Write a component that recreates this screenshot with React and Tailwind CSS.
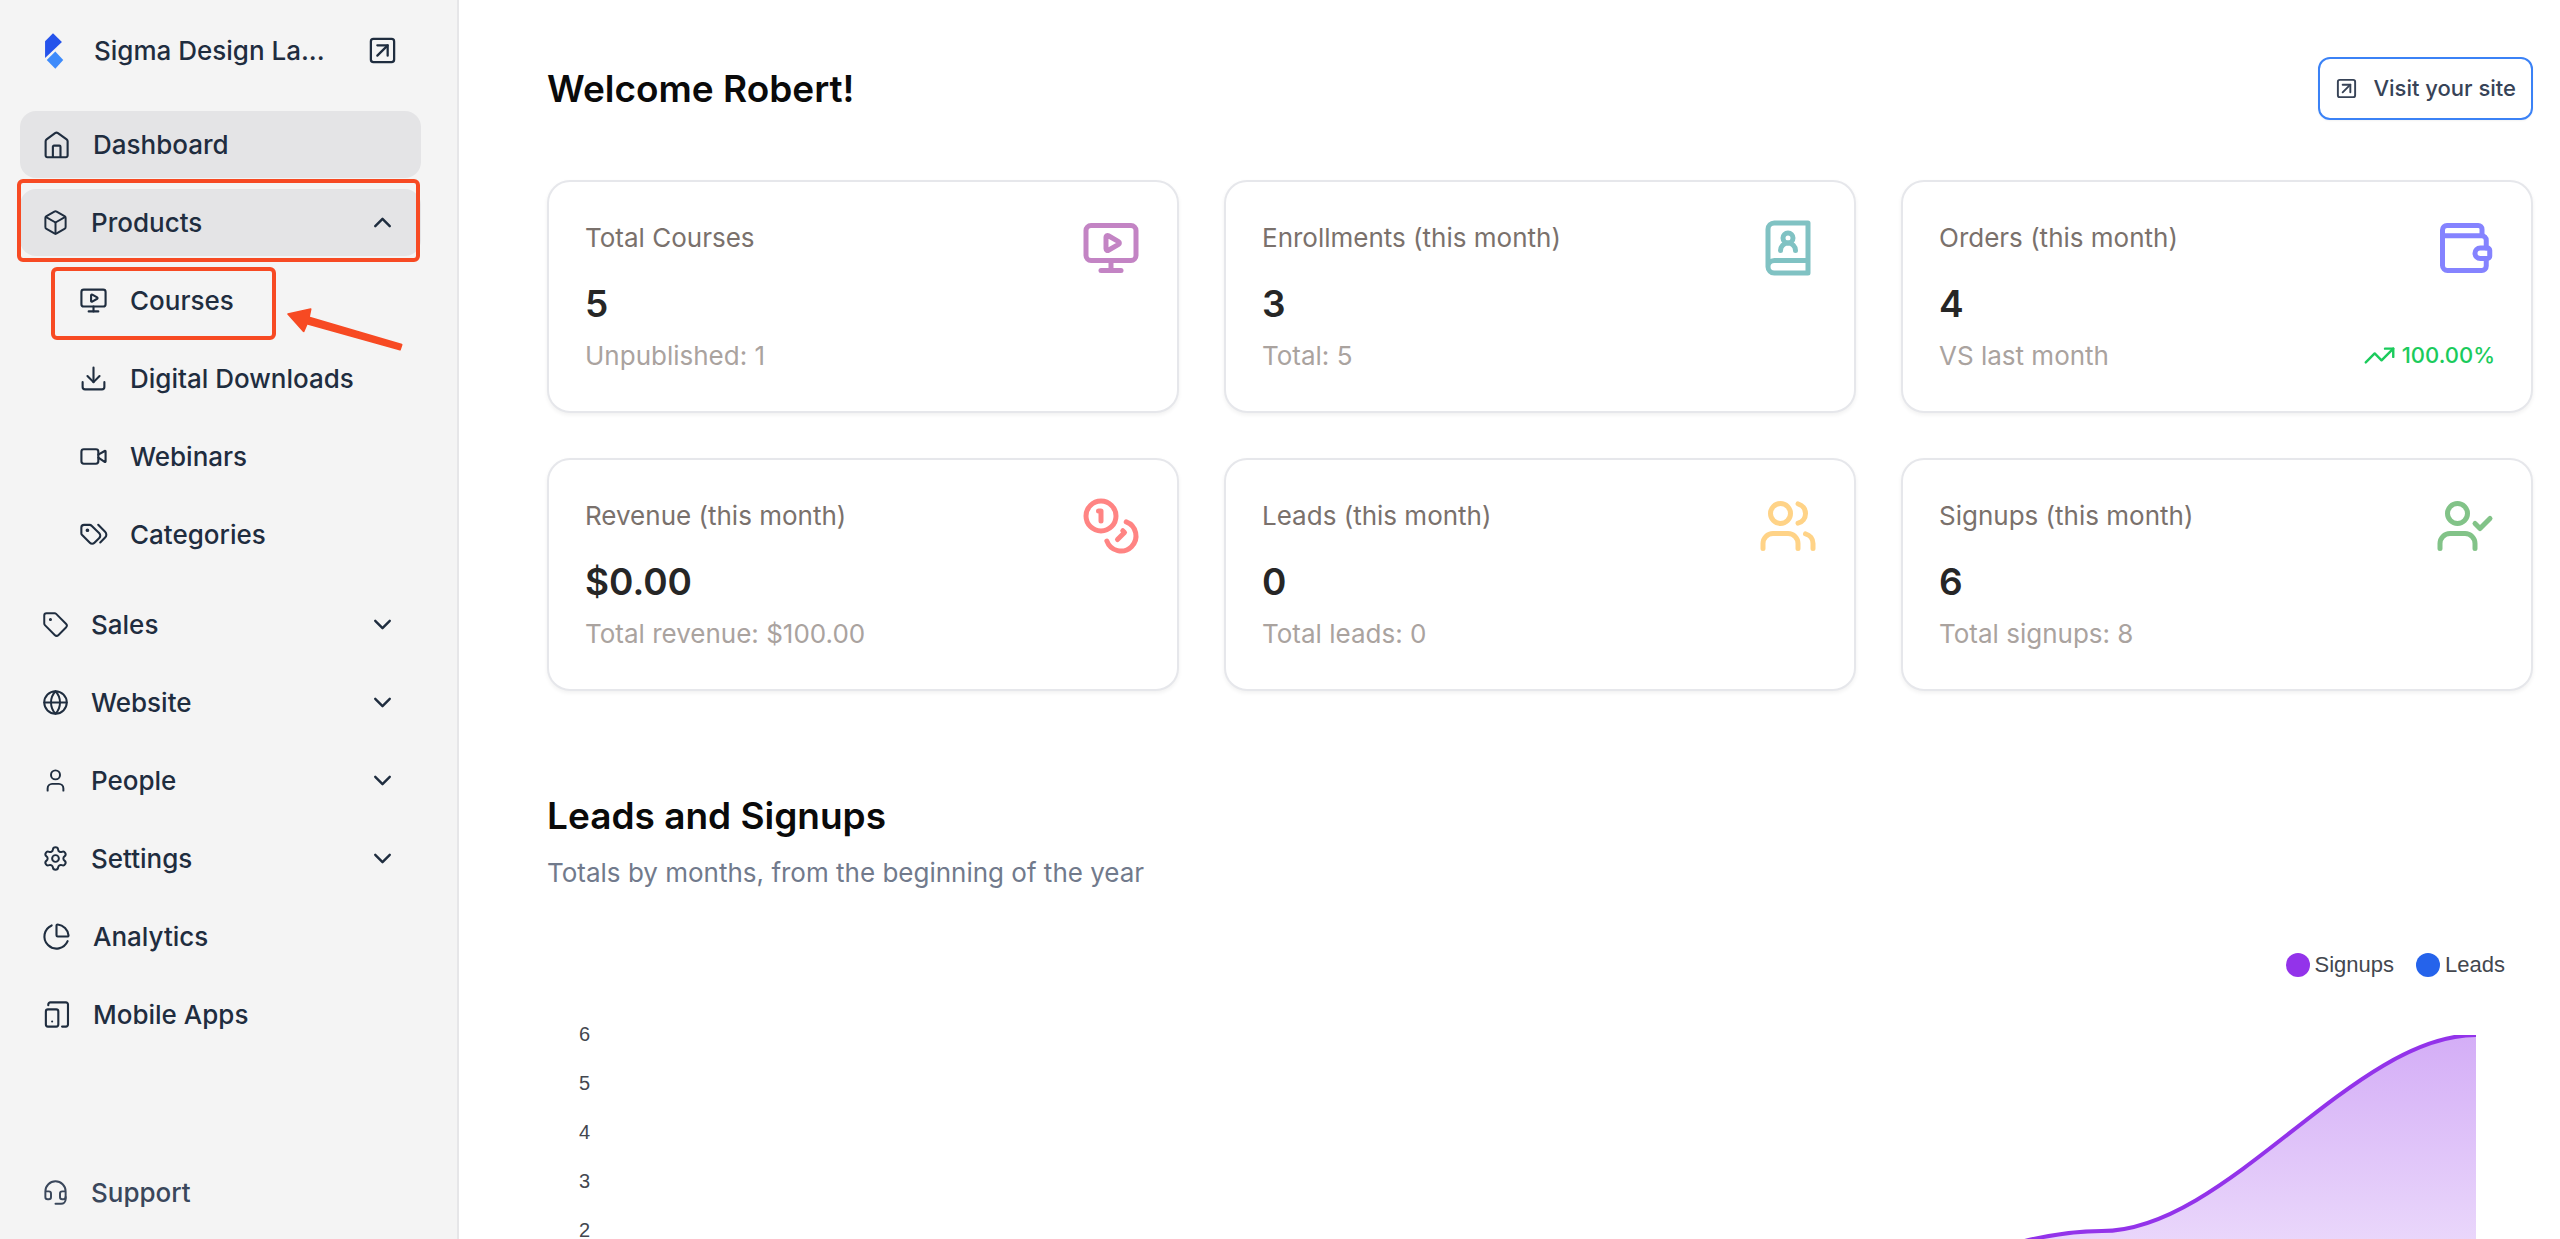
import React, { useState } from "react";
import {
  Box,
  ChartPie,
  ChevronDown,
  ChevronUp,
  Download,
  Globe,
  Headset,
  MonitorPlay,
  Settings,
  SquareArrowUpRight,
  Tag,
  TrendingUp,
  User,
  Video,
} from "lucide-react";

const Icon = ({ children, viewBox = "0 0 24 24", strokeWidth = 1.5, className }) => (
  <svg
    viewBox={viewBox}
    fill="none"
    stroke="currentColor"
    strokeWidth={strokeWidth}
    strokeLinecap="round"
    strokeLinejoin="round"
    className={className}
    aria-hidden="true"
  >
    {children}
  </svg>
);

const HomeIcon = (props) => (
  <Icon {...props}>
    <path d="M3 9.4a2 2 0 0 1 .8-1.6l7-5.2a2 2 0 0 1 2.4 0l7.2 5.2a2 2 0 0 1 .8 1.6v11.7a1.4 1.4 0 0 1-1.4 1.4H4.4A1.4 1.4 0 0 1 3 21.1z" />
    <path d="M9 22.3V13.8a.9.9 0 0 1 .9-.9h4.5a.9.9 0 0 1 .9.9v8.500" />
  </Icon>
);

const TagsIcon = (props) => (
  <Icon {...props} viewBox="1.250 2.400 21.500 21.500" strokeWidth={1.55}>
    <path d="M3 8v4.172a2 2 0 0 0 .586 1.414l5.71 5.71a2.41 2.41 0 0 0 3.408 0l3.592-3.592a2.41 2.41 0 0 0 0-3.408l-5.71-5.71A2 2 0 0 0 9.172 6H5a2 2 0 0 0-2 2" />
    <path d="m17 19 3.592-3.592a3 3 0 0 0 0-4.316L15.500 6" />
    <circle cx="7.500" cy="10" r=".6" fill="currentColor" />
  </Icon>
);

const DevicesIcon = (props) => (
  <Icon {...props}>
    <rect x="3.200" y="7.800" width="10.300" height="14.200" rx="1.700" />
    <path d="M5.2 4.3v-.6A1.7 1.7 0 0 1 6.9 2h12.9a1.7 1.7 0 0 1 1.7 1.7v16.6a1.7 1.7 0 0 1-1.7 1.7h-3.200" />
    <path d="M8.400 17.800v.01" />
  </Icon>
);

const BookUserIcon = (props) => (
  <Icon {...props}>
    <path d="M4 19.5v-15A2.5 2.5 0 0 1 6.5 2H20v20H6.5a2.5 2.5 0 0 1 0-5H20" />
    <circle cx="12" cy="8" r="2" />
    <path d="M15 13a3 3 0 1 0-6 0" />
  </Icon>
);

const WalletIcon = (props) => (
  <Icon {...props}>
    <path d="M18.8 7V4.5A1.5 1.5 0 0 0 17.3 3H4.8A1.8 1.8 0 0 0 3 4.8V19a2 2 0 0 0 2 2h13.7a1.8 1.8 0 0 0 1.8-1.8v-3" />
    <path d="M3 7.1h15.7a1.8 1.8 0 0 1 1.8 1.8V12" />
    <path d="M18.1 12H21a.9.9 0 0 1 .9.9v2.4a.9.9 0 0 1-.9.9h-2.9a2.1 2.1 0 0 1 0-4.200z" />
  </Icon>
);

const CoinsIcon = (props) => (
  <Icon {...props}>
    <circle cx="8" cy="8" r="6" />
    <path d="M18.09 10.37A6 6 0 1 1 10.34 18" />
    <path d="M7 6h1v4" />
    <path d="m16.71 13.88.7.71-2.82 2.82" />
  </Icon>
);

const UsersIcon = (props) => (
  <Icon {...props}>
    <path d="M16 21v-2a4 4 0 0 0-4-4H6a4 4 0 0 0-4 4v2" />
    <circle cx="9" cy="7" r="4" />
    <path d="M22 21v-2a4 4 0 0 0-3-3.87" />
    <path d="M16 3.13a4 4 0 0 1 0 7.75" />
  </Icon>
);

const UserCheckIcon = (props) => (
  <Icon {...props}>
    <path d="M16 21v-2a4 4 0 0 0-4-4H6a4 4 0 0 0-4 4v2" />
    <circle cx="9" cy="7" r="4" />
    <path d="m16 11 2 2 4-4" />
  </Icon>
);

const Logo = () => (
  <svg viewBox="134 99 58 109" className="w-5 h-9 shrink-0" aria-hidden="true">
    <path d="M160 100 187 126 136 175V124z" fill="#2553eb" />
    <path d="M167 155 191 181 167 207 141 181z" fill="#3e8bfb" />
  </svg>
);

const productLinks = [
  { name: "Courses", icon: MonitorPlay },
  { name: "Digital Downloads", icon: Download },
  { name: "Webinars", icon: Video },
  { name: "Categories", icon: TagsIcon },
];

const groups = [
  { name: "Sales", icon: Tag },
  { name: "Website", icon: Globe },
  { name: "People", icon: User },
  { name: "Settings", icon: Settings },
];

const cards = [
  { title: "Total Courses", value: "5", note: "Unpublished: 1", icon: MonitorPlay, color: "text-[#c384c4]" },
  { title: "Enrollments (this month)", value: "3", note: "Total: 5", icon: BookUserIcon, color: "text-[#80c2c3]" },
  { title: "Orders (this month)", value: "4", note: "VS last month", icon: WalletIcon, color: "text-[#8583ff]", trend: "100.00%" },
  { title: "Revenue (this month)", value: "$0.00", note: "Total revenue: $100.00", icon: CoinsIcon, color: "text-[#ff8483]" },
  { title: "Leads (this month)", value: "0", note: "Total leads: 0", icon: UsersIcon, color: "text-[#ffd387]" },
  { title: "Signups (this month)", value: "6", note: "Total signups: 8", icon: UserCheckIcon, color: "text-[#82c388]" },
];

const NavLink = ({ name, icon: NavIcon, active, nested }) => (
  <a
    href="#"
    className={`flex items-center gap-[22px] h-[67px] pr-[22px] rounded-2xl ${
      nested ? "pl-[59px]" : "pl-[22px]"
    } ${active ? "bg-[#e4e4e6]" : ""}`}
  >
    <NavIcon className="size-[29px] shrink-0" strokeWidth={1.75} />
    {name}
  </a>
);

const NavGroup = ({ name, icon: NavIcon, open, onClick }) => (
  <button
    type="button"
    onClick={onClick}
    aria-expanded={open}
    className={`flex items-center gap-[22px] w-full h-[67px] pl-[22px] pr-6 rounded-2xl ${
      open ? "bg-[#e4e4e6]" : ""
    }`}
  >
    <NavIcon className="size-[27px] shrink-0" strokeWidth={1.75} />
    <span className="flex-1 text-left">{name}</span>
    {open ? (
      <ChevronUp className="size-[29px]" strokeWidth={2} />
    ) : (
      <ChevronDown className="size-[29px]" strokeWidth={2} />
    )}
  </button>
);

const Sidebar = () => {
  const [openGroup, setOpenGroup] = useState("Products"); // Only one group is open at a time
  const toggle = (name) => setOpenGroup(openGroup === name ? null : name);

  return (
    <aside className="relative flex flex-col w-[459px] shrink-0 pl-5 pr-9 pt-[17px] pb-[13px] bg-[#f4f4f4] border-r-2 border-[#e6e6e8] text-[26px] font-medium text-[#1f2d3f]">
      <div className="flex items-center h-[67px] pl-6 pr-[23px] mb-[27px]">
        <Logo />
        <span className="flex-1 pl-[30px] whitespace-nowrap">Sigma Design La...</span>
        <a href="#" aria-label="Open site">
          <SquareArrowUpRight className="size-[31px]" strokeWidth={1.75} />
        </a>
      </div>

      <nav className="flex flex-col gap-[11px]">
        <NavLink name="Dashboard" icon={HomeIcon} active />
        <NavGroup
          name="Products"
          icon={Box}
          open={openGroup === "Products"}
          onClick={() => toggle("Products")}
        />
        {openGroup === "Products" && (
          <div className="flex flex-col gap-[11px] mb-3">
            {productLinks.map((link) => (
              <NavLink key={link.name} name={link.name} icon={link.icon} nested />
            ))}
          </div>
        )}
        {groups.map((group) => (
          <NavGroup
            key={group.name}
            name={group.name}
            icon={group.icon}
            open={openGroup === group.name}
            onClick={() => toggle(group.name)}
          />
        ))}
        <NavLink name="Analytics" icon={ChartPie} />
        <NavLink name="Mobile Apps" icon={DevicesIcon} />
      </nav>

      <a href="#" className="flex items-center gap-[22px] h-[67px] px-[22px] mt-auto text-[#3a475b]">
        <Headset className="size-[27px]" strokeWidth={1.75} />
        Support
      </a>

      {/* Callouts over the menu */}
      <div className="absolute left-[17px] top-[179px] w-[403px] h-[83px] border-4 border-[#f74a23] rounded-md pointer-events-none" />
      <div className="absolute left-[51px] top-[267px] w-[225px] h-[73px] border-4 border-[#f74a23] rounded-md pointer-events-none" />
      <svg
        viewBox="858 922 354 135"
        className="absolute left-[286px] top-[307px] w-[118px] h-[45px] pointer-events-none"
        aria-hidden="true"
      >
        <path
          d="M864 943 932 928 927 953 1205 1035 1200 1050 921 972 911 995z"
          fill="#f74a23"
          stroke="#f74a23"
          strokeWidth="5"
          strokeLinejoin="round"
        />
      </svg>
    </aside>
  );
};

const StatCard = ({ title, value, note, icon: CardIcon, color, trend }) => (
  <div className="relative p-[36px] bg-white border-2 border-[#e6e7eb] rounded-[23px] shadow-[0_2px_4px_rgba(0,0,0,0.06)]">
    <div className="text-[26px] leading-[39px] text-[#7a716c]">{title}</div>
    <div className="mt-5 text-[37px] leading-[54px] font-semibold text-[#262626]">{value}</div>
    <div className="flex items-center justify-between mt-[5px]">
      <span className="text-[26px] leading-[39px] text-[#aaa39f]">{note}</span>
      {trend && (
        <span className="flex items-center gap-1.5 text-[22px] leading-[39px] font-medium text-[#1bcb5c]">
          <TrendingUp className="size-[33px]" strokeWidth={1.75} />
          {trend}
        </span>
      )}
    </div>
    <CardIcon className={`absolute right-[36px] top-[36px] size-[60px] ${color}`} strokeWidth={2} />
  </div>
);

const SignupsChart = () => (
  <div className="font-['Liberation_Sans',sans-serif] text-[#43474f]">
    <div className="flex justify-end gap-[22px] pr-7 text-[22px] leading-6">
      <span className="flex items-center gap-[5px]">
        <i className="size-6 rounded-full bg-[#9333ea]" />
        Signups
      </span>
      <span className="flex items-center gap-[5px]">
        <i className="size-6 rounded-full bg-[#2563eb]" />
        Leads
      </span>
    </div>
    <div className="flex mt-[49px] pl-[30px] pr-[57px]">
      <div className="flex flex-col gap-[33px] w-[13px] text-right text-[20px] leading-4">
        {[6, 5, 4, 3, 2].map((tick) => (
          <span key={tick}>{tick}</span>
        ))}
      </div>
      <svg
        viewBox="0 0 1874 204"
        preserveAspectRatio="none"
        className="flex-1 min-w-0 h-[204px] mt-[9px] ml-[11px]"
        role="img"
        aria-label="Signups by month"
      >
        <defs>
          <linearGradient id="signupsFill" x1="0" y1="0" x2="0" y2="204" gradientUnits="userSpaceOnUse">
            <stop offset="0" stopColor="#9333ea" stopOpacity="0.4" />
            <stop offset="1" stopColor="#9333ea" stopOpacity="0.2" />
          </linearGradient>
        </defs>
        <path
          d="M1134 284C1257 284 1377 196 1500 196C1625 196 1751 0 1874 0V293H1134z"
          fill="url(#signupsFill)"
        />
        <path
          d="M1134 284C1257 284 1377 196 1500 196C1625 196 1751 0 1874 0"
          fill="none"
          stroke="#9333ea"
          strokeWidth="4"
        />
      </svg>
    </div>
  </div>
);

const App = () => {
  return (
    <div className="flex h-screen overflow-hidden bg-white font-['Inter',sans-serif]">
      <Sidebar />
      <main className="flex-1 min-w-0 pl-[88px] pr-[27px] pt-[57px]">
        <div className="flex items-center justify-between">
          <h1 className="text-[37px] leading-[54px] font-semibold text-[#0a0a0a]">Welcome Robert!</h1>
          <a
            href="#"
            className="flex items-center gap-[15px] h-[63px] px-[15px] border-2 border-[#3b82f6] rounded-xl text-[22px] font-medium text-[#374357] shadow-xs"
          >
            <SquareArrowUpRight className="size-[23px]" strokeWidth={2} />
            Visit your site
          </a>
        </div>

        <div className="grid grid-cols-3 gap-[45px] mt-[60px]">
          {cards.map((card) => (
            <StatCard key={card.title} {...card} />
          ))}
        </div>

        <h2 className="mt-[98px] text-[37px] leading-[54px] font-semibold text-[#0a0a0a]">
          Leads and Signups
        </h2>
        <p className="mt-[10px] mb-[61px] text-[26px] leading-[39px] text-[#717a8c]">
          Totals by months, from the beginning of the year
        </p>
        <SignupsChart />
      </main>
    </div>
  );
};

export default App;
